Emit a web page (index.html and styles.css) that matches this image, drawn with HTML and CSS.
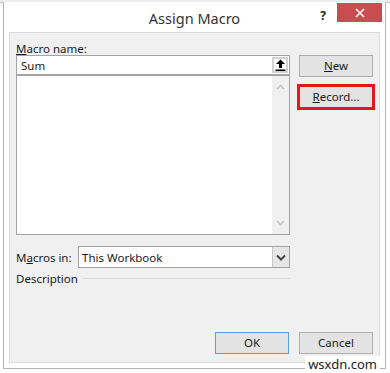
FILE: index.html
```html
<!DOCTYPE html>
<html>
<head>
<meta charset="utf-8">
<link rel="stylesheet" href="styles.css">
</head>
<body>
<div class="strip"></div>
<div class="window">
  <div class="titlebar">
    <div></div>
    <div class="title">Assign Macro</div>
    <div class="controls">
      <span class="help">?</span>
      <span class="close">
        <svg width="10" height="10" viewBox="0 0 10 10"><path d="M1 1 L9 9 M9 1 L1 9" stroke="#fff" stroke-width="1.6" fill="none"/></svg>
      </span>
    </div>
  </div>
  <div class="panel">
    <div class="main">
      <div class="leftcol">
        <div class="label top"><u>M</u>acro name:</div>
        <div class="namebox">
          <span class="nametext">Sum</span>
          <span class="upbtn">
            <svg width="11" height="12" viewBox="0 0 11 12"><path d="M5.5 0.5 L10 5 L7 5 L7 9 L4 9 L4 5 L1 5 Z" fill="#000"/><rect x="0.5" y="10.5" width="10" height="1.5" fill="#000"/></svg>
          </span>
        </div>
        <div class="listbox">
          <div class="listarea"></div>
          <div class="scrollbar">
            <svg width="9" height="6" viewBox="0 0 9 6"><path d="M1 5 L4.5 1.5 L8 5" stroke="#c4c4c4" stroke-width="1.6" fill="none"/></svg>
            <svg width="9" height="6" viewBox="0 0 9 6"><path d="M1 1 L4.5 4.5 L8 1" stroke="#c4c4c4" stroke-width="1.6" fill="none"/></svg>
          </div>
        </div>
        <div class="inrow">
          <span class="label">M<u>a</u>cros in:</span>
          <div class="select">
            <span class="seltext">This Workbook</span>
            <span class="selbtn">
              <svg width="10" height="7" viewBox="0 0 10 7"><path d="M1 1.5 L5 5.5 L9 1.5" stroke="#444" stroke-width="2" fill="none"/></svg>
            </span>
          </div>
        </div>
        <div class="descrow">
          <span class="label">Description</span>
          <span class="rule"></span>
        </div>
      </div>
      <div class="rightcol">
        <button class="btn new"><u>N</u>ew</button>
        <button class="btn record"><u>R</u>ecord...</button>
      </div>
    </div>
    <div class="bottom">
      <button class="btn ok">OK</button>
      <button class="btn">Cancel</button>
    </div>
  </div>
</div>
<div class="watermark">wsxdn.com</div>
</body>
</html>
```

FILE: styles.css
```css
* { box-sizing: border-box; }
html, body { margin: 0; padding: 0; }
body {
  width: 390px;
  height: 373px;
  background: #fff;
  font-family: "Noto Sans", "Open Sans", sans-serif;
  font-size: 11.5px;
  color: #1a1a1a;
  position: relative;
  overflow: hidden;
}
.strip {
  height: 3px;
  background: #ececec;
  border-bottom: 1px solid #c4c4c4;
}
.window {
  margin-left: 3px;
  width: 383px;
  height: 367px;
  margin-top: -1px;
  border-left: 1px solid #b4b4b4;
  border-right: 1px solid #b4b4b4;
  border-bottom: 1px solid #b4b4b4;
  background: #fff;
  display: flex;
  flex-direction: column;
}
.titlebar {
  height: 30px;
  display: grid;
  grid-template-columns: 1fr auto 1fr;
  align-items: start;
}
.title {
  font-size: 14.5px;
  color: #333;
  line-height: 30px;
  padding-top: 1px;
}
.controls {
  display: flex;
  justify-content: flex-end;
  align-items: flex-start;
  padding-right: 3px;
}
.help {
  font-weight: bold;
  font-size: 12px;
  color: #222;
  margin-top: 5px;
  margin-right: 11px;
}
.close {
  width: 45px;
  height: 19px;
  margin-top: 1px;
  background: #c94c4f;
  display: flex;
  align-items: center;
  justify-content: center;
}
.panel {
  margin-left: 5px;
  width: 371px;
  height: 331px;
  background: #f0f0f0;
  border: 1px solid #dadada;
  padding: 8px 6px 8px 6px;
  display: flex;
  flex-direction: column;
}
.main {
  display: flex;
  gap: 9px;
}
.leftcol {
  width: 274px;
  display: flex;
  flex-direction: column;
}
.label {
  line-height: 14px;
  height: 14px;
  white-space: nowrap;
}
.label.top {
  padding-top: 1px;
  height: 14px;
}
.namebox {
  height: 20px;
  background: #fff;
  border: 1px solid #a3a3a3;
  display: flex;
  align-items: center;
  justify-content: space-between;
  padding: 0 1px 0 4px;
}
.upbtn {
  width: 16px;
  height: 16px;
  border: 2px solid #d2d2d2;
  background: #fff;
  display: flex;
  align-items: center;
  justify-content: center;
}
.listbox {
  height: 160px;
  border: 1px solid #a3a3a3;
  background: #fff;
  display: flex;
}
.listarea { flex: 1; }
.scrollbar {
  width: 17px;
  background: #f0f0f0;
  display: flex;
  flex-direction: column;
  align-items: center;
  justify-content: space-between;
  padding: 8px 0 8px;
}
.inrow {
  margin-top: 11px;
  display: flex;
  align-items: center;
  justify-content: space-between;
}
.inrow .label { padding-top: 1px; }
.select {
  width: 212px;
  height: 22px;
  background: #fff;
  border: 1px solid #a3a3a3;
  display: flex;
  align-items: center;
  justify-content: space-between;
  padding-left: 3px;
}
.selbtn {
  width: 17px;
  height: 20px;
  background: #e6e6e6;
  border-left: 1px solid #c8c8c8;
  display: flex;
  align-items: center;
  justify-content: center;
}
.descrow {
  margin-top: 4px;
  display: flex;
  align-items: center;
  gap: 5px;
}
.rule {
  flex: 1;
  height: 1px;
  background: #dcdcdc;
  margin-top: -1px;
}
.rightcol {
  width: 74px;
  display: flex;
  flex-direction: column;
  padding-top: 14px;
}
.btn {
  width: 74px;
  height: 22px;
  background: #e3e3e3;
  border: 1px solid #adadad;
  font-family: inherit;
  font-size: 11.5px;
  color: #1a1a1a;
  padding: 0;
  line-height: 18px;
}
.record {
  margin-top: 9px;
  outline: 3px solid #e8131b;
  outline-offset: -1px;
}
.bottom {
  margin-top: auto;
  display: flex;
  justify-content: flex-end;
  gap: 10px;
}
.ok {
  border-color: #5a9bd8;
}
.watermark {
  position: absolute;
  right: 10px;
  bottom: 0;
  background: #fff;
  padding: 1px 3px 2px;
  font-size: 13px;
  line-height: 14px;
  color: #222;
}
```
